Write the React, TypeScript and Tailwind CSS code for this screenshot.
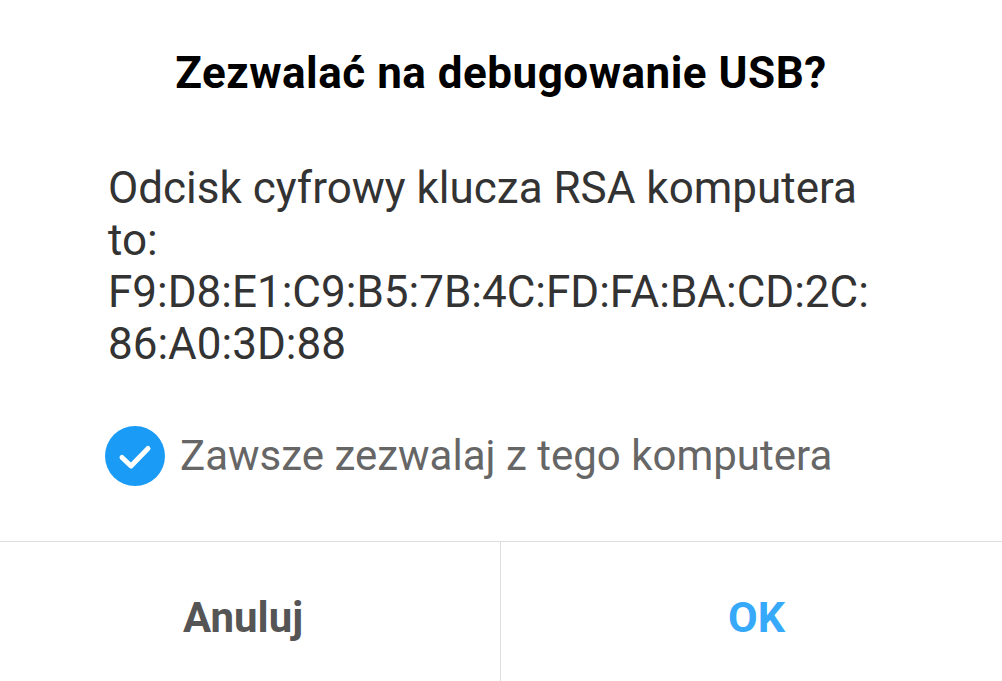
import React from "react";

const font = { fontFamily: "Roboto, 'Noto Sans', sans-serif" };

const CheckCircle: React.FC = () => (
    <svg width="60" height="60" viewBox="0 0 60 60" className="shrink-0">
        <circle cx="30" cy="30" r="30" fill="#1a9bf6" />
        <path
            d="M17 31.5 L26 40 L43 22.5"
            fill="none"
            stroke="#fff"
            strokeWidth="5"
            strokeLinecap="round"
            strokeLinejoin="round"
        />
    </svg>
);

export default function App() {
    return (
        <div
            className="w-[1002px] h-[681px] bg-white flex flex-col overflow-hidden"
            style={font}
        >
            {/* Tytuł */}
            <h1 className="pt-[49px] text-center text-[44px] leading-[48px] tracking-[0.5px] font-bold text-black">
                Zezwalać na debugowanie USB?
            </h1>

            {/* Treść */}
            <div className="pl-[108px] mt-[65px] text-[44px] leading-[52px] text-[#333333]">
                <p>Odcisk cyfrowy klucza RSA komputera</p>
                <p>to:</p>
                <p>F9:D8:E1:C9:B5:7B:4C:FD:FA:BA:CD:2C:</p>
                <p>86:A0:3D:88</p>
            </div>

            {/* Checkbox */}
            <div className="flex items-center gap-[15px] pl-[105px] mt-[56px]">
                <CheckCircle />
                <span className="text-[42px] leading-[48px] text-[#666666]">
                    Zawsze zezwalaj z tego komputera
                </span>
            </div>

            {/* Przyciski */}
            <div className="mt-auto h-[140px] flex border-t border-[#dddddd]">
                <button className="w-1/2 flex items-center justify-center pt-[12px] pr-[14px] text-[42px] font-bold text-[#555555] border-r border-[#dddddd]">
                    Anuluj
                </button>
                <button className="w-1/2 flex items-center justify-center pt-[12px] pl-[10px] text-[43px] font-bold text-[#36a9fa]">
                    OK
                </button>
            </div>
        </div>
    );
}
